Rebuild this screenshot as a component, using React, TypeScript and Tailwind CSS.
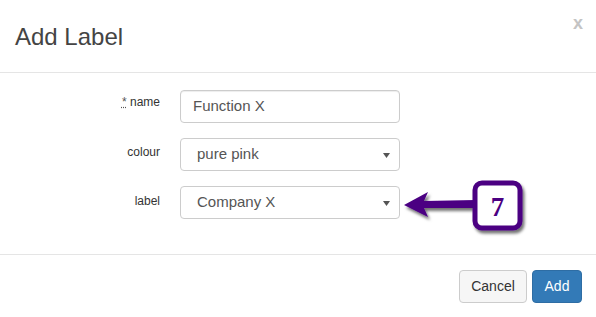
import React from "react";

const Caret = () => (
  <svg width="7" height="5" viewBox="0 0 7 5" className="absolute right-[9px] top-[14px]">
    <path d="M0 0 L7 0 L3.5 5 Z" fill="#555" />
  </svg>
);

export default function App() {
  return (
    <div
      className="relative w-[596px] h-[317px] bg-white overflow-hidden"
      style={{ fontFamily: '"Liberation Sans", Arial, sans-serif' }}
    >
      {/* header */}
      <div className="h-[73px] border-b border-[#e5e5e5] flex items-start justify-between pl-[15px] pr-[13px]">
        <h4 className="text-[24px] leading-[26px] text-[#444] mt-[24px]">Add Label</h4>
        <span className="text-[18px] leading-[18px] font-bold text-[#c4c4c4] mt-[14px]">x</span>
      </div>
      {/* body */}
      <div className="h-[182px] border-b border-[#e5e5e5] pt-[17px] flex flex-col gap-[15px]">
        <div className="flex items-start">
          <div className="w-[160px] text-right text-[12px] text-[#333] pt-[3px]">
            <abbr className="underline text-[#555]" style={{ textDecorationStyle: "dotted" }}>*</abbr>{" "}name
          </div>
          <div className="ml-[20px] w-[220px] h-[33px] border border-[#ccc] rounded-[4px] pl-[12px] flex items-center text-[15px] text-[#555] shadow-[inset_0_1px_1px_rgba(0,0,0,0.075)]">
            Function X
          </div>
        </div>
        <div className="flex items-start">
          <div className="w-[160px] text-right text-[12px] text-[#333] pt-[5px]">colour</div>
          <div className="relative ml-[20px] w-[220px] h-[33px] border border-[#ccc] rounded-[4px] pl-[16px] flex items-center text-[15px] text-[#555]">
            pure pink
            <Caret />
          </div>
        </div>
        <div className="flex items-start">
          <div className="w-[160px] text-right text-[12px] text-[#333] pt-[6px]">label</div>
          <div className="relative ml-[20px] w-[220px] h-[33px] border border-[#ccc] rounded-[4px] pl-[16px] flex items-center text-[15px] text-[#555]">
            Company X
            <Caret />
          </div>
        </div>
      </div>
      {/* footer */}
      <div className="flex justify-end gap-[5px] pt-[15px] pr-[14px]">
        <button className="h-[33px] w-[68px] border border-[#ccc] bg-[#f6f6f6] rounded-[4px] text-[14px] text-[#333]">
          Cancel
        </button>
        <button className="h-[33px] w-[50px] border border-[#2e6da4] bg-[#337ab7] rounded-[4px] text-[14px] text-white">
          Add
        </button>
      </div>
      {/* annotation */}
      <svg
        className="absolute left-[400px] top-[175px]"
        width="135"
        height="62"
        viewBox="0 0 135 62"
      >
        <defs>
          <filter id="sh" x="-20%" y="-20%" width="150%" height="150%">
            <feDropShadow dx="2" dy="3" stdDeviation="1.5" floodColor="#000" floodOpacity="0.55" />
          </filter>
        </defs>
        <g filter="url(#sh)">
          <path
            d="M4 30 L28 17 L24 26 L76 25 L76 33 L24 33 L28 42 Z"
            fill="#4b0082"
          />
          <rect x="75" y="8" width="45" height="45" rx="7" fill="#fff" stroke="#4b0082" strokeWidth="5" />
        </g>
        <text
          x="97.5"
          y="41"
          textAnchor="middle"
          fontFamily='"Liberation Serif", "Times New Roman", serif'
          fontWeight="bold"
          fontSize="27"
          fill="#4b0082"
        >
          7
        </text>
      </svg>
    </div>
  );
}
